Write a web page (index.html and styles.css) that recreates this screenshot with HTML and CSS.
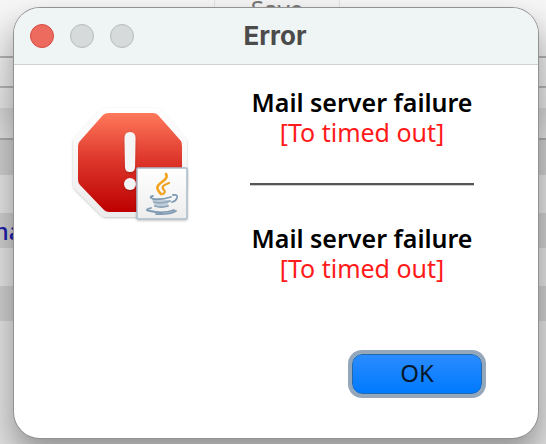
FILE: index.html
```
<!DOCTYPE html>
<html lang="en">
<head>
<meta charset="utf-8">
<title>Error</title>
<link rel="stylesheet" href="styles.css">
</head>
<body>
<div class="mail">
  <div class="toolbar"><button class="save" type="button">Save</button></div>
  <div class="field"></div>
  <div class="gap"></div>
  <div class="header"></div>
  <div class="row shaded"></div>
  <div class="row"></div>
  <div class="row shaded"><span class="sender">ma</span></div>
  <div class="row"></div>
  <div class="row shaded"></div>
</div>
<div class="overlay">
  <section class="dialog" role="alertdialog" aria-labelledby="title">
    <header class="titlebar">
      <div class="lights">
        <button class="light close" type="button" aria-label="Close"></button>
        <button class="light" type="button" aria-label="Minimize" disabled></button>
        <button class="light" type="button" aria-label="Zoom" disabled></button>
      </div>
      <h1 class="title" id="title">Error</h1>
    </header>
    <div class="content">
      <svg class="icon" viewBox="0 0 128 124" aria-hidden="true">
        <defs>
          <linearGradient id="red" x1="0" y1="0" x2="0" y2="1">
            <stop offset="0" stop-color="#ff795b"/>
            <stop offset=".45" stop-color="#df392d"/>
            <stop offset="1" stop-color="#bd0000"/>
          </linearGradient>
          <linearGradient id="rim" x1="0" y1="0" x2="0" y2="1">
            <stop offset="0" stop-color="#fff"/>
            <stop offset="1" stop-color="#ececec"/>
          </linearGradient>
          <linearGradient id="tile" x1="0" y1="0" x2="0" y2="1">
            <stop offset="0" stop-color="#fff"/>
            <stop offset="1" stop-color="#ededee"/>
          </linearGradient>
          <filter id="shade" x="-20%" y="-20%" width="140%" height="140%">
            <feDropShadow dx="0" dy="1" stdDeviation="1" flood-opacity=".24"/>
          </filter>
        </defs>
        <path d="M39 5H90Q93 5 95 7L119 34Q121 36 121 39V82Q121 85 119 87L94 112Q92 114 89 114H40Q37 114 35 112L9 86Q7 84 7 81V39Q7 36 9 34L34 7Q36 5 39 5Z" fill="url(#rim)" filter="url(#shade)"/>
        <path d="M43 10H87Q90 10 92 12L115 38Q116 40 116 43V78Q116 81 114 83L91 107Q89 109 86 109H43Q40 109 38 107L14 82Q12 80 12 77V43Q12 40 14 38L37 12Q39 10 43 10Z" fill="url(#red)"/>
        <g fill="#f5f5f5" filter="url(#shade)">
          <path d="M58.500 35Q58.500 29 64 29Q69.500 29 69.500 35L69 64Q69 69 64 69Q59 69 59 64Z"/>
          <circle cx="64" cy="81" r="6"/>
        </g>
        <rect x="71" y="65" width="50" height="51" rx="1" fill="url(#tile)" stroke="#a9bccc" stroke-width="1.5" filter="url(#shade)"/>
        <g fill="none" stroke-linecap="round" stroke-linejoin="round">
          <path d="M100 71C104 78 88 80 92 87Q93 89 95 91" stroke="#f3a51f" stroke-width="2.6"/>
          <path d="M103 80C97 82 95 84 98 87Q100 89 97 91" stroke="#efa126" stroke-width="2.2"/>
          <g stroke="#7f9ab2" stroke-width="1.8">
            <path d="M87 93Q82 94 87 96Q96 97 105 94"/>
            <path d="M88 99Q95 101 104 98M89 103Q95 105 102 103"/>
            <path d="M107 92Q112 91 111 95Q110 98 106 99"/>
            <path d="M85 105Q77 107 84 108Q98 111 108 107M90 111Q103 112 110 108"/>
          </g>
          <path d="M86 97L89 103Q95 106 101 103L104 97Z" fill="#9fb4c7" fill-opacity=".6"/>
        </g>
      </svg>
      <div class="messages">
        <p class="message"><strong>Mail server failure</strong><span class="reason">[To timed out]</span></p>
        <hr class="rule">
        <p class="message"><strong>Mail server failure</strong><span class="reason">[To timed out]</span></p>
      </div>
    </div>
    <footer class="actions"><button class="ok" type="button">OK</button></footer>
  </section>
</div>
</body>
</html>
```
FILE: styles.css
```
* {
  box-sizing: border-box;
}

body {
  margin: 0;
  min-height: 100vh;
  overflow: hidden;
  background: #e6e6e6;
  font-family: "Noto Sans", "Open Sans", sans-serif;
}

.mail {
  display: flex;
  flex-direction: column;
  min-height: 100vh;
  background: linear-gradient(#f6f6f6, #e2e2e2 100px, #dedede);
}

.toolbar {
  display: flex;
  justify-content: center;
  height: 56px;
  padding-left: 8px;
}

.save {
  width: 126px;
  height: 34px;
  margin-top: -8px;
  padding: 0;
  border: 1px solid #e2e2e2;
  background: #f4f4f4;
  color: #777;
  font: 24px/30px "Noto Sans", sans-serif;
}

.field {
  height: 32px;
  border: solid #b0b0b0;
  border-width: 2px 0;
}

.gap {
  height: 20px;
}

.header {
  height: 32px;
  border-bottom: 2px solid #a8a8a8;
  background: linear-gradient(#d0d0d0, #dedede);
}

.row {
  height: 38px;
}

.shaded {
  height: 35px;
  background: #cbcbcb;
}

.sender {
  display: block;
  margin-left: -14px;
  color: #1c1ca8;
  font-size: 24px;
  font-weight: 500;
  line-height: 35px;
}

.overlay {
  position: absolute;
  inset: 0;
  display: flex;
  padding: 8px 8px 6px 14px;
}

.dialog {
  flex: 1;
  display: flex;
  flex-direction: column;
  overflow: hidden;
  border-radius: 26px;
  background: #fff;
  box-shadow: 0 0 0 1px #929292, 0 16px 30px rgba(0, 0, 0, .35);
}

.titlebar {
  display: grid;
  grid-template-columns: 1fr auto 1fr;
  align-items: center;
  height: 57px;
  padding: 0 18px 0 16px;
  border-bottom: 1px solid #d0d2d2;
  background: #eff4f5;
}

.lights {
  display: flex;
  gap: 16px;
}

.light {
  width: 24px;
  height: 24px;
  padding: 0;
  border: 1px solid #b7babb;
  border-radius: 50%;
  background: #d6dadb;
}

.close {
  border-color: #d64b40;
  background: #ed6a5e;
}

.title {
  margin: 0;
  color: #4b4b4b;
  font: bold 26px/32px Inter, sans-serif;
}

.content {
  display: flex;
  align-items: flex-start;
  gap: 56px;
  padding: 22px 64px 0 52px;
}

.icon {
  flex: none;
  width: 128px;
  height: 124px;
  margin-top: 16px;
}

.messages {
  flex: 1;
  min-width: 0;
  text-align: center;
  white-space: nowrap;
}

.message {
  margin: 0;
  font-size: 25px;
  line-height: 30px;
}

.message strong,
.reason {
  display: block;
}

.message strong {
  font-weight: 600;
}

.reason {
  color: #ff1a1a;
}

.rule {
  height: 3px;
  margin: 36px 0 37px;
  border: 0;
  border-top: 2px solid #555;
  border-bottom: 1px solid #ccc;
}

.actions {
  display: flex;
  justify-content: flex-end;
  margin-top: auto;
  padding: 0 56px 44px 0;
}

.ok {
  width: 130px;
  height: 40px;
  padding: 0 0 2px;
  border: 1px solid #2269ad;
  border-radius: 10px;
  background: linear-gradient(#2b8cff, #007aff);
  box-shadow: 0 0 0 4px #94a7bb;
  color: #08182b;
  font: 24px/36px "Noto Sans", sans-serif;
}
```
